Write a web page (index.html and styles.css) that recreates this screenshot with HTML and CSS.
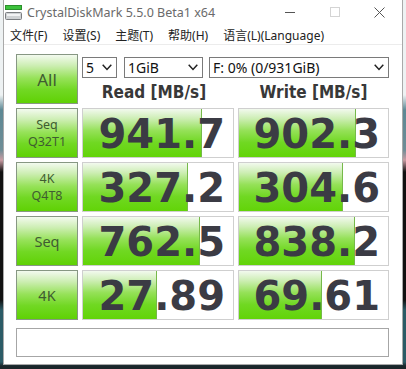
FILE: index.html
```html
<!DOCTYPE html>
<html lang="zh">
<head>
    <meta charset="UTF-8">
    <title>CrystalDiskMark 5.5.0 Beta1 x64</title>
    <link rel="stylesheet" href="styles.css">
</head>
<body>

    <div class="window">
        <div class="titlebar">
            <svg class="app-icon" width="17" height="16" viewBox="0 0 17 16">
                <rect x="0.5" y="0.5" width="16" height="4" fill="#3cc23c" stroke="#2b8f2b"/>
                <rect x="0.5" y="7.5" width="16" height="7" rx="1" fill="#cfd2d4" stroke="#7a7d80"/>
                <rect x="2" y="9" width="13" height="2" fill="#f2f3f4"/>
            </svg>
            <span class="title">CrystalDiskMark 5.5.0 Beta1 x64</span>
            <div class="controls">
                <div class="ctl">
                    <svg width="10" height="10" viewBox="0 0 10 10"><path d="M0 5.5h10" stroke="#555" stroke-width="1"/></svg>
                </div>
                <div class="ctl">
                    <svg width="10" height="10" viewBox="0 0 10 10"><rect x="0.5" y="0.5" width="9" height="9" fill="none" stroke="#d4d4d4"/></svg>
                </div>
                <div class="ctl">
                    <svg width="11" height="11" viewBox="0 0 11 11"><path d="M0.5 0.5l10 10M10.5 0.5l-10 10" stroke="#555" stroke-width="1"/></svg>
                </div>
            </div>
        </div>

        <div class="menubar">
            <span>文件(F)</span>
            <span>设置(S)</span>
            <span>主题(T)</span>
            <span>帮助(H)</span>
            <span>语言(L)(Language)</span>
        </div>

        <div class="client">
            <div class="grid">
                <div class="btn btn-all">All</div>
                <div class="setup">
                    <div class="selects">
                        <div class="select sel-count">5<svg class="chev" width="10" height="7" viewBox="0 0 10 7"><path d="M0.7 0.8l4.3 4.6 4.3-4.6" fill="none" stroke="#222" stroke-width="1.5"/></svg></div>
                        <div class="select sel-size">1GiB<svg class="chev" width="10" height="7" viewBox="0 0 10 7"><path d="M0.7 0.8l4.3 4.6 4.3-4.6" fill="none" stroke="#222" stroke-width="1.5"/></svg></div>
                        <div class="select sel-drive">F: 0% (0/931GiB)<svg class="chev" width="10" height="7" viewBox="0 0 10 7"><path d="M0.7 0.8l4.3 4.6 4.3-4.6" fill="none" stroke="#222" stroke-width="1.5"/></svg></div>
                    </div>
                    <div class="heads">
                        <div class="head head-read">Read [MB/s]</div>
                        <div class="head">Write [MB/s]</div>
                    </div>
                </div>

                <div class="btn btn-small">Seq<br>Q32T1</div>
                <div class="cell"><div class="fill" style="width: 79%"></div><span class="val">941.7</span></div>
                <div class="cell"><div class="fill" style="width: 78.5%"></div><span class="val">902.3</span></div>

                <div class="btn btn-small">4K<br>Q4T8</div>
                <div class="cell"><div class="fill" style="width: 70%"></div><span class="val">327.2</span></div>
                <div class="cell"><div class="fill" style="width: 70%"></div><span class="val">304.6</span></div>

                <div class="btn btn-big">Seq</div>
                <div class="cell"><div class="fill" style="width: 78%"></div><span class="val">762.5</span></div>
                <div class="cell"><div class="fill" style="width: 78%"></div><span class="val">838.2</span></div>

                <div class="btn btn-big">4K</div>
                <div class="cell"><div class="fill" style="width: 49%"></div><span class="val">27.89</span></div>
                <div class="cell"><div class="fill" style="width: 56%"></div><span class="val">69.61</span></div>
            </div>

            <div class="comment"></div>
        </div>
    </div>

</body>
</html>
```

FILE: styles.css
```css
/* Reset CSS */
* {
    margin: 0;
    padding: 0;
    box-sizing: border-box;
}

body {
    width: 406px;
    height: 369px;
    overflow: hidden;
    font-family: "Noto Sans", "Noto Sans CJK SC", sans-serif;
    background: linear-gradient(to bottom, #eef2f3 0, #eef2f3 95px, #5d8894 110px, #6f8d96 150px, #c99ca3 160px, #111 172px, #111 300px, #2c5b66 310px, #2c5b66 362px, #1b262a 366px);
}

.window {
    margin-left: 3px;
    width: 400px;
    height: 365px;
    background-color: #fff;
    border: 1px solid #a9a9a9;
    border-top: none;
    display: flex;
    flex-direction: column;
}

/* title bar */
.titlebar {
    height: 26px;
    display: flex;
    align-items: center;
    padding-left: 1px;
}

.app-icon {
    margin-top: -1px;
}

.title {
    margin-left: 5px;
    font-size: 12.5px;
    color: #6a6a6a;
    margin-top: -1px;
}

.controls {
    margin-left: auto;
    display: flex;
    height: 100%;
}

.ctl {
    width: 45px;
    display: flex;
    justify-content: center;
    align-items: center;
    padding-bottom: 2px;
}

/* menu */
.menubar {
    height: 19px;
    display: flex;
    gap: 15px;
    padding-left: 6px;
    font-size: 12px;
    color: #222;
    border-bottom: 1px solid #ececec;
    align-items: center;
    padding-bottom: 1px;
}

/* main area */
.client {
    padding: 9px 0 0 12px;
}

.grid {
    display: grid;
    grid-template-columns: 62px 152px 151px;
    grid-auto-rows: 50px;
    gap: 4px;
}

.btn {
    border: 1px solid #879783;
    background: linear-gradient(to bottom, #f3faef 0%, #cdeeb3 22%, #97e25a 48%, #72d824 72%, #5fd104 100%);
    color: #3f5c31;
    display: flex;
    justify-content: center;
    align-items: center;
    text-align: center;
}

.btn-all {
    font-size: 17px;
}

.btn-small {
    font-size: 12.5px;
    line-height: 17px;
}

.btn-big {
    font-size: 14.5px;
}

.setup {
    grid-column: 2 / 4;
    display: flex;
    flex-direction: column;
}

.selects {
    display: flex;
    margin-top: 3px;
    height: 21px;
}

.select {
    border: 1px solid #7a7a7a;
    font-size: 14px;
    color: #111;
    display: flex;
    align-items: center;
    padding-left: 3px;
    position: relative;
}

.chev {
    margin-left: auto;
    margin-right: 4px;
}

.sel-count {
    width: 35px;
}

.sel-size {
    width: 79px;
    margin-left: 7px;
}

.sel-drive {
    width: 180px;
    margin-left: 6px;
}

.heads {
    display: grid;
    grid-template-columns: 152px 151px;
    gap: 4px;
    flex: 1;
    align-items: center;
}

.head {
    font-family: "DejaVu Sans Condensed", "DejaVu Sans", sans-serif;
    font-stretch: condensed;
    font-weight: bold;
    font-size: 17px;
    color: #383838;
    text-align: center;
    padding-top: 1px;
}

.head-read {
    padding-right: 8px;
}

.cell {
    border: 1px solid #cfcfcf;
    position: relative;
    display: flex;
    justify-content: flex-end;
    align-items: center;
    padding-right: 8px;
    overflow: hidden;
}

.fill {
    position: absolute;
    left: 0;
    top: 0;
    bottom: 0;
    background: linear-gradient(to bottom, #f2f9ee 0%, #cdeeb4 20%, #95e158 45%, #70d822 70%, #62d408 100%);
    border-right: 1px solid #76b94a;
}

.val {
    position: relative;
    font-family: "DejaVu Sans", sans-serif;
    font-weight: bold;
    font-size: 40px;
    color: #3b3b44;
    margin-top: 2px;
}

.comment {
    margin-top: 8px;
    width: 373px;
    height: 29px;
    border: 1px solid #a6a6a6;
}
```
